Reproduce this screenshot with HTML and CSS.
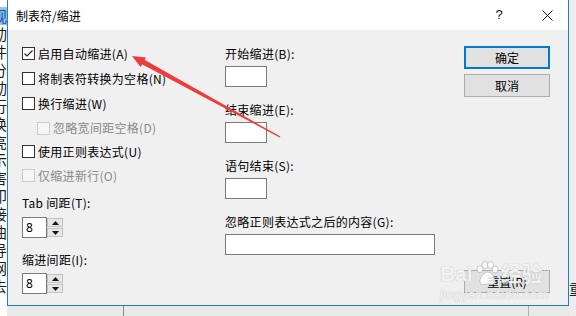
FILE: index.html
```html
<!DOCTYPE html>
<html lang="zh-CN">
<head>
<meta charset="utf-8">
<title>制表符/缩进</title>
<link rel="stylesheet" href="styles.css">
</head>
<body>
<div class="screen">
  <div class="bg-left">
    <span class="hl">观</span><span>动</span><span>件</span><span>分</span><span>动</span><span>行</span><span>换</span><span>亮</span><span>示</span><span>害</span><span>印</span><span>接</span><span>曲</span><span>导</span><span>网</span><span>去</span>
  </div>
  <div class="center">
    <div class="dialog">
      <div class="titlebar">
        <span class="title">制表符/缩进</span>
        <span class="help">?</span>
        <span class="close">
          <svg width="11" height="11" viewBox="0 0 11 11"><path d="M0.5 0.5 L10.5 10.5 M10.5 0.5 L0.5 10.5" stroke="#111" stroke-width="1" fill="none"/></svg>
        </span>
      </div>
      <div class="content">
        <div class="col-left">
          <label class="row"><span class="cb"><svg width="11" height="11" viewBox="0 0 11 11"><path d="M1.5 5.5 L4 8 L9.5 2.5" stroke="#222" stroke-width="1.1" fill="none"/></svg></span><span>启用自动缩进(A)</span></label>
          <label class="row"><span class="cb"></span><span>将制表符转换为空格(N)</span></label>
          <label class="row"><span class="cb"></span><span>换行缩进(W)</span></label>
          <label class="row row-s indent disabled"><span class="cb"></span><span>忽略宽间距空格(D)</span></label>
          <label class="row row-xs"><span class="cb"></span><span>使用正则表达式(U)</span></label>
          <label class="row disabled"><span class="cb"></span><span>仅缩进新行(O)</span></label>
          <div class="lbl lbl-tab">Tab 间距(T):</div>
          <div class="spin spin-1">
            <span class="spin-input">8</span>
            <span class="spin-btns">
              <span class="sb"><svg width="7" height="4" viewBox="0 0 7 4"><path d="M0 4 L3.5 0 L7 4 Z" fill="#111"/></svg></span>
              <span class="sb"><svg width="7" height="4" viewBox="0 0 7 4"><path d="M0 0 L3.5 4 L7 0 Z" fill="#111"/></svg></span>
            </span>
          </div>
          <div class="lbl lbl-ind">缩进间距(I):</div>
          <div class="spin spin-2">
            <span class="spin-input">8</span>
            <span class="spin-btns">
              <span class="sb"><svg width="7" height="4" viewBox="0 0 7 4"><path d="M0 4 L3.5 0 L7 4 Z" fill="#111"/></svg></span>
              <span class="sb"><svg width="7" height="4" viewBox="0 0 7 4"><path d="M0 0 L3.5 4 L7 0 Z" fill="#111"/></svg></span>
            </span>
          </div>
        </div>
        <div class="col-mid">
          <div class="group"><div class="lbl">开始缩进(B):</div><div class="box"></div></div>
          <div class="group"><div class="lbl">结束缩进(E):</div><div class="box"></div></div>
          <div class="group"><div class="lbl">语句结束(S):</div><div class="box"></div></div>
          <div class="group"><div class="lbl">忽略正则表达式之后的内容(G):</div><div class="box box-wide"></div></div>
        </div>
        <div class="col-right">
          <div class="btn btn-default">确定</div>
          <div class="btn btn-cancel">取消</div>
          <div class="btn btn-reset">重置(R)</div>
        </div>
      </div>
    </div>
    <div class="bg-bottom"><span class="seg seg-a"></span><span class="seg seg-b"></span></div>
  </div>
  <div class="bg-right"><span class="rglyph">重</span></div>

  <svg class="arrow" width="576" height="316" viewBox="0 0 576 316">
    <polygon points="143.9,59.6 141.5,64.0 279.6,137.4 280.4,136.6" fill="#ee3b3b"/>
    <polygon points="132,56 146,57.5 140.5,67" fill="#ee3b3b"/>
  </svg>

  <div class="watermark">
    <div class="wm-top"><span>Bai</span>
      <svg class="paw" width="26" height="26" viewBox="0 0 26 26">
        <g fill="rgba(255,255,255,0.85)" stroke="rgba(150,150,150,0.6)" stroke-width="0.8">
          <ellipse cx="6" cy="8" rx="3" ry="3.6"/>
          <ellipse cx="11" cy="4" rx="3" ry="3.6"/>
          <ellipse cx="16.5" cy="4" rx="3" ry="3.6"/>
          <ellipse cx="21" cy="8.5" rx="3" ry="3.6"/>
          <path d="M13.5 11 C9 11 5 18 6 21.5 C7 25 11 23 13.5 23 C16 23 20 25 21 21.5 C22 18 18 11 13.5 11 Z"/>
        </g>
      </svg>
      <span>经验</span></div>
    <div class="wm-bot">jingyan.baidu.com</div>
  </div>
</div>
</body>
</html>
```

FILE: styles.css
```css
* { box-sizing: border-box; }
html, body { margin: 0; padding: 0; }
body {
  width: 576px;
  height: 316px;
  overflow: hidden;
  font-family: "Noto Sans CJK SC", "Noto Sans", sans-serif;
  font-size: 12px;
  color: #000;
}
.screen {
  position: relative;
  display: flex;
  width: 576px;
  height: 316px;
  background: #ffffff;
}
.bg-left {
  width: 7px;
  height: 316px;
  overflow: hidden;
  display: flex;
  flex-direction: column;
  padding-top: 7px;
  background: #fff;
}
.bg-left span {
  display: block;
  margin-left: -8px;
  width: 15px;
  font-size: 15px;
  line-height: 18px;
  height: 18px;
  color: #1c1c1c;
}
.bg-left span.hl {
  background: #8fc3ef;
  color: #1a4f9c;
}
.center {
  width: 562px;
  display: flex;
  flex-direction: column;
}
.dialog {
  width: 562px;
  height: 306px;
  border: 1px solid #1a7fd6;
  border-top: none;
  background: #f0f0f0;
  display: flex;
  flex-direction: column;
}
.titlebar {
  height: 30px;
  background: #fff;
  display: flex;
  align-items: center;
  padding-left: 8px;
}
.title {
  flex: 1;
  font-size: 12px;
  line-height: 16px;
  margin-top: 1px;
}
.help {
  width: 30px;
  text-align: center;
  margin-right: 12px;
  font-family: "Liberation Sans", sans-serif;
  font-size: 13px;
  line-height: 16px;
  color: #111;
}
.close {
  width: 42px;
  display: flex;
  justify-content: center;
  align-items: center;
  height: 30px;
}
.content {
  flex: 1;
  display: flex;
  padding: 11px 0 0 14px;
}
.col-left {
  width: 203px;
  display: flex;
  flex-direction: column;
}
.row {
  height: 25px;
  display: flex;
  align-items: center;
  line-height: 16px;
  letter-spacing: 0.3px;
}
.row-s { height: 24px; }
.row-xs { height: 23px; }
.cb {
  width: 13px;
  height: 13px;
  border: 1px solid #333;
  background: #fff;
  margin-right: 3px;
  display: flex;
  align-items: center;
  justify-content: center;
  flex: none;
}
.indent { padding-left: 15px; }
.disabled { color: #8a8a8a; }
.disabled .cb { border-color: #cccccc; background: #f6f6f6; }
.lbl {
  line-height: 16px;
  height: 16px;
  white-space: nowrap;
  letter-spacing: 0.3px;
}
.lbl-tab { margin-top: 7px; }
.lbl-ind { margin-top: 14px; }
.spin {
  display: flex;
  height: 21px;
  width: 41px;
}
.spin-1 { margin-top: 6px; }
.spin-2 { margin-top: 5px; }
.spin-input {
  width: 25px;
  height: 21px;
  border: 1px solid #7a7a7a;
  background: #fff;
  padding-left: 3px;
  font-family: "Noto Sans", sans-serif;
  font-size: 12px;
  line-height: 19px;
}
.spin-btns {
  width: 16px;
  height: 21px;
  display: flex;
  flex-direction: column;
  gap: 1px;
  padding: 1px 0;
}
.sb {
  flex: 1;
  border: 1px solid #c2c2c2;
  background: #e6e6e6;
  display: flex;
  align-items: center;
  justify-content: center;
}
.col-mid {
  width: 239px;
  display: flex;
  flex-direction: column;
  padding-top: 5px;
  gap: 15px;
}
.group {
  display: flex;
  flex-direction: column;
  gap: 4px;
}
.box {
  width: 42px;
  height: 21px;
  border: 1px solid #7a7a7a;
  background: #fff;
}
.box-wide { width: 210px; }
.col-right {
  width: 86px;
  display: flex;
  flex-direction: column;
  padding-top: 5px;
}
.btn {
  width: 86px;
  height: 23px;
  background: #e1e1e1;
  border: 1px solid #adadad;
  display: flex;
  align-items: center;
  justify-content: center;
  line-height: 16px;
}
.btn-default { border: 2px solid #0078d7; }
.btn-cancel { margin-top: 5px; }
.btn-reset { margin-top: 173px; }
.bg-bottom {
  flex: 1;
  background: #e9e9e9;
  position: relative;
  display: flex;
}
.seg { display: block; height: 100%; border-right: 1px solid #8a8a8a; }
.seg-a { width: 117px; }
.seg-b { width: 405px; border-right-color: #b0b0b0; }
.bg-right {
  width: 7px;
  background: #ededed;
  display: flex;
  flex-direction: column;
  justify-content: flex-end;
  overflow: hidden;
  padding-bottom: 18px;
}
.rglyph {
  font-size: 15px;
  line-height: 18px;
  width: 15px;
  color: #222;
}
.arrow {
  position: absolute;
  left: 0;
  top: 0;
  pointer-events: none;
}
.watermark {
  position: absolute;
  left: 440px;
  top: 260px;
  width: 104px;
  color: rgba(255, 255, 255, 0.85);
  text-shadow: 0 0 1px rgba(130, 130, 130, 0.6);
  pointer-events: none;
}
.wm-top {
  display: flex;
  align-items: center;
  font-family: "Liberation Sans", "Noto Sans CJK SC", sans-serif;
  font-weight: bold;
  font-size: 21px;
  line-height: 26px;
  height: 28px;
}
.paw { margin: 0 1px; }
.wm-bot {
  font-family: "Liberation Sans", sans-serif;
  font-size: 13px;
  line-height: 14px;
  letter-spacing: 0.2px;
}
```
